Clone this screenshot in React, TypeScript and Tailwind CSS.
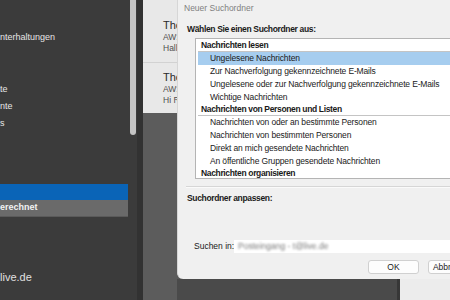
import React from "react";

const items1 = [
  "Ungelesene Nachrichten",
  "Zur Nachverfolgung gekennzeichnete E-Mails",
  "Ungelesene oder zur Nachverfolgung gekennzeichnete E-Mails",
  "Wichtige Nachrichten",
];
const items2 = [
  "Nachrichten von oder an bestimmte Personen",
  "Nachrichten von bestimmten Personen",
  "Direkt an mich gesendete Nachrichten",
  "An öffentliche Gruppen gesendete Nachrichten",
];

export default function App() {
  return (
    <div className="w-[450px] h-[300px] flex overflow-hidden font-['Liberation_Sans',Arial,sans-serif] text-[8.5px] bg-[#3b3b3b]">
      {/* Left navigation panel */}
      <div className="w-[143px] shrink-0 flex bg-[#3b3b3b]">
        <div className="w-[130px] flex flex-col text-[#e6e6e6] text-[9px]">
          <div className="mt-[31px] h-[12px] leading-[12px]">nterhaltungen</div>
          <div className="mt-[38px] h-[17px] flex items-center">te</div>
          <div className="h-[17px] flex items-center">nte</div>
          <div className="h-[17px] flex items-center">s</div>
          <div className="mt-[52px] w-[128px] h-[16px] bg-[#0a64b7]" />
          <div className="w-[128px] h-[17px] bg-[#6a6a6a] flex items-center font-bold text-[#f2f2f2] border-b border-[#5a5a5a]">
            erechnet
          </div>
          <div className="mt-[53px] h-[15px] leading-[15px] text-[11px] text-[#e0e0e0]">live.de</div>
        </div>
        <div className="w-[6px] shrink-0">
          <div className="h-[135px] rounded-b-full bg-[#c4c4c4]" />
        </div>
        <div className="w-[1px] shrink-0" />
        <div className="w-[6px] shrink-0 bg-[#323232]" />
      </div>

      {/* Message list column */}
      <div className="w-[34px] shrink-0 flex flex-col overflow-hidden">
        <div className="h-[113px] bg-[#e8e8e8] flex flex-col pl-[20px] whitespace-nowrap">
          <div className="mt-[18px] h-[14px] leading-[14px] text-[11px] text-[#2a2a2a]">Thomas</div>
          <div className="h-[11px] leading-[11px] text-[#4f4f4f]">AW: Anfrage</div>
          <div className="h-[11px] leading-[11px] text-[#4f4f4f]">Hallo</div>
          <div className="mt-[8px] -ml-[20px] h-[1px] bg-[#d2d2d2]" />
          <div className="mt-[7px] h-[14px] leading-[14px] text-[11px] text-[#2a2a2a]">Thomas</div>
          <div className="h-[11px] leading-[11px] text-[#4f4f4f]">AW: Anfrage</div>
          <div className="h-[11px] leading-[11px] text-[#4f4f4f]">Hi René</div>
        </div>
        <div className="flex-1 bg-[#5c5c5c]" />
      </div>

      {/* Dialog column */}
      <div className="w-[273px] shrink-0 flex flex-col overflow-hidden bg-[#5a5a5a]">
        <div className="w-[340px] h-[279px] shrink-0 bg-[#f0f0f0] rounded-bl-[6px] border-l border-[#d6d6d6] flex flex-col text-[#1a1a1a] whitespace-nowrap">
          <div className="h-[17px] flex items-center pl-[6px] text-[#808080]">Neuer Suchordner</div>
          <div className="mt-[6px] h-[12px] leading-[12px] pl-[9px] font-bold tracking-[-0.35px]">Wählen Sie einen Suchordner aus:</div>
          <div className="mt-[3px] ml-[17px] h-[141px] bg-white border border-[#b4b4b4] flex flex-col">
            <div className="h-[12px] leading-[12px] pl-[5px] font-bold tracking-[-0.35px]">Nachrichten lesen</div>
            <div className="ml-[2px] h-[1px] bg-[#c4c4c4]" />
            {items1.map((t, i) => (
              <div
                key={t}
                className={
                  i === 0
                    ? "ml-[2px] h-[13px] flex items-center pl-[12px] bg-[#a6cdef] tracking-[-0.15px]"
                    : "ml-[2px] h-[13px] flex items-center pl-[12px] tracking-[-0.15px]"
                }
              >
                {t}
              </div>
            ))}
            <div className="h-[11px] leading-[11px] pl-[5px] font-bold tracking-[-0.35px]">Nachrichten von Personen und Listen</div>
            <div className="ml-[2px] h-[1px] bg-[#c4c4c4]" />
            {items2.map((t) => (
              <div key={t} className="ml-[2px] h-[13px] flex items-center pl-[12px] tracking-[-0.15px]">
                {t}
              </div>
            ))}
            <div className="h-[10px] leading-[10px] pl-[5px] font-bold tracking-[-0.35px]">Nachrichten organisieren</div>
          </div>
          <div className="mt-[7px] ml-[8px] h-[1px] bg-[#d6d6d6]" />
          <div className="ml-[8px] h-[1px] bg-[#fafafa]" />
          <div className="mt-[4px] h-[12px] leading-[12px] pl-[9px] font-bold tracking-[-0.35px]">Suchordner anpassen:</div>
          <div className="mt-[36px] h-[13px] flex items-center">
            <div className="w-[56px] pl-[16px]">Suchen in:</div>
            <div className="flex-1 h-[13px] bg-white flex items-center pl-[4px]">
              <span className="blur-[1px] text-[#7a7a7a]">Posteingang - t@live.de</span>
            </div>
          </div>
          <div className="mt-[7px] h-[14px] flex pl-[190px] gap-[9px]">
            <div className="w-[51px] h-[14px] bg-[#fdfdfd] border border-[#d0d0d0] rounded-[3px] flex items-center justify-center">
              OK
            </div>
            <div className="w-[51px] h-[14px] bg-[#fdfdfd] border border-[#d0d0d0] rounded-[3px] flex items-center justify-center">
              Abbrechen
            </div>
          </div>
        </div>
        <div className="flex-1 flex">
          <div className="w-[220px] bg-[#4a4a4a]" />
          <div className="w-[3px] bg-[#373737]" />
          <div className="flex-1 bg-[#ececec]" />
        </div>
      </div>
    </div>
  );
}
